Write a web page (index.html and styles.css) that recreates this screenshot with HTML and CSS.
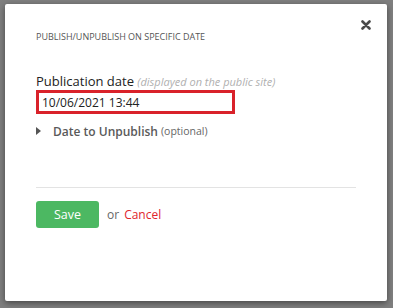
FILE: index.html
```html
<!DOCTYPE html>
<html lang="en">
  <head>
    <meta charset="UTF-8" />
    <meta name="viewport" content="width=device-width, initial-scale=1.0" />
    <title>Publish/Unpublish on specific date</title>
    <link rel="stylesheet" href="styles.css">
  </head>
  <body>
    <div class="modal">
      <button class="close" type="button" aria-label="Close">
        <svg width="10" height="10" viewBox="0 0 10 10">
          <path d="M1.5 1.5 L8.5 8.5 M8.5 1.5 L1.5 8.5" stroke="#4a4a4a" stroke-width="2.6" stroke-linecap="round" />
        </svg>
      </button>

      <div class="title">Publish/Unpublish on specific date</div>

      <div class="field">
        <label class="label" for="pub-date">
          Publication date <em>(displayed on the public site)</em>
        </label>
        <input id="pub-date" class="date-input" type="text" value="10/06/2021 13:44" />
      </div>

      <div class="toggle">
        <span class="arrow"></span>
        <span class="toggle-text">Date to Unpublish</span>
        <span class="optional">(optional)</span>
      </div>

      <div class="divider"></div>

      <div class="actions">
        <button class="save" type="button">Save</button>
        <span class="or">or</span>
        <a class="cancel" href="#">Cancel</a>
      </div>
    </div>
  </body>
</html>
```

FILE: styles.css
```css
html,
body {
  height: 100%;
}
body {
  margin: 0;
  padding: 4px 6px 0 5px;
  box-sizing: border-box;
  background: #7f7f7f;
  font-family: 'Open Sans', 'Noto Sans', sans-serif;
}
.modal {
  position: relative;
  height: 297px;
  background: #fff;
  border-radius: 2px;
  box-shadow: 0 2px 6px rgba(0, 0, 0, 0.45);
  padding: 27px 31px 0;
  box-sizing: border-box;
}
.close {
  position: absolute;
  top: 16px;
  right: 16px;
  border: 0;
  background: none;
  padding: 0;
  line-height: 0;
  cursor: pointer;
}
.title {
  font-size: 9px;
  line-height: 12px;
  text-transform: uppercase;
  color: #555;
}
.field {
  margin-top: 30px;
}
.label {
  display: block;
  font-size: 13px;
  line-height: 17px;
  color: #222;
}
.label em {
  font-size: 11px;
  color: #b0b0b0;
}
.date-input {
  display: block;
  width: 199px;
  height: 24px;
  box-sizing: border-box;
  border: 3px solid #d9222a;
  padding: 0 3px;
  font-family: 'Open Sans', 'Noto Sans', sans-serif;
  font-size: 12px;
  color: #222;
  outline: none;
}
.toggle {
  display: flex;
  align-items: center;
  margin-top: 9px;
  height: 16px;
}
.arrow {
  width: 0;
  height: 0;
  border-top: 4px solid transparent;
  border-bottom: 4px solid transparent;
  border-left: 5px solid #555;
  margin-right: 12px;
}
.toggle-text {
  font-size: 12px;
  font-weight: 600;
  color: #5a5a5a;
}
.optional {
  font-size: 10.5px;
  color: #666;
  margin-left: 3px;
}
.divider {
  margin-top: 48px;
  border-top: 1px solid #e3e3e3;
}
.actions {
  display: flex;
  align-items: center;
  margin-top: 13px;
}
.save {
  width: 63px;
  height: 27px;
  border: 0;
  border-radius: 3px;
  background: #4cb862;
  color: #fff;
  font-family: 'Open Sans', 'Noto Sans', sans-serif;
  font-size: 12.5px;
  cursor: pointer;
}
.or {
  margin-left: 8px;
  font-size: 12px;
  color: #666;
}
.cancel {
  margin-left: 5px;
  font-size: 12px;
  color: #e0242c;
  text-decoration: none;
}
```
